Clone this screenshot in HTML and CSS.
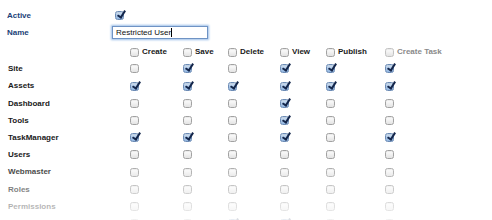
FILE: index.html
```html
<!DOCTYPE html>
<html lang="en">
<head>
    <meta charset="UTF-8">
    <title>Role</title>
    <link rel="stylesheet" href="styles.css">
</head>
<body>
    <div id="wrap">
        <div class="field">
            <label class="lbl">Active</label>
            <span class="cb on active-cb"></span>
        </div>
        <div class="field">
            <label class="lbl">Name</label>
            <span class="input">Restricted User<i class="caret"></i></span>
        </div>

        <div class="perm">
            <div class="row head">
                <span></span>
                <span><i class="cb"></i>Create</span>
                <span><i class="cb"></i>Save</span>
                <span><i class="cb"></i>Delete</span>
                <span><i class="cb"></i>View</span>
                <span><i class="cb"></i>Publish</span>
                <span class="off"><i class="cb"></i>Create Task</span>
            </div>
            <div class="row">
                <span>Site</span>
                <span><i class="cb"></i></span><span><i class="cb on"></i></span><span><i class="cb"></i></span>
                <span><i class="cb on"></i></span><span><i class="cb on"></i></span><span><i class="cb on"></i></span>
            </div>
            <div class="row">
                <span>Assets</span>
                <span><i class="cb on"></i></span><span><i class="cb on"></i></span><span><i class="cb on"></i></span>
                <span><i class="cb on"></i></span><span><i class="cb on"></i></span><span><i class="cb on"></i></span>
            </div>
            <div class="row">
                <span>Dashboard</span>
                <span><i class="cb"></i></span><span><i class="cb"></i></span><span><i class="cb"></i></span>
                <span><i class="cb on"></i></span><span><i class="cb"></i></span><span><i class="cb"></i></span>
            </div>
            <div class="row">
                <span>Tools</span>
                <span><i class="cb"></i></span><span><i class="cb"></i></span><span><i class="cb"></i></span>
                <span><i class="cb on"></i></span><span><i class="cb"></i></span><span><i class="cb"></i></span>
            </div>
            <div class="row">
                <span>TaskManager</span>
                <span><i class="cb on"></i></span><span><i class="cb on"></i></span><span><i class="cb"></i></span>
                <span><i class="cb on"></i></span><span><i class="cb"></i></span><span><i class="cb on"></i></span>
            </div>
            <div class="row">
                <span>Users</span>
                <span><i class="cb"></i></span><span><i class="cb"></i></span><span><i class="cb"></i></span>
                <span><i class="cb"></i></span><span><i class="cb"></i></span><span><i class="cb"></i></span>
            </div>
            <div class="row">
                <span>Webmaster</span>
                <span><i class="cb"></i></span><span><i class="cb"></i></span><span><i class="cb"></i></span>
                <span><i class="cb"></i></span><span><i class="cb"></i></span><span><i class="cb"></i></span>
            </div>
            <div class="row">
                <span>Roles</span>
                <span><i class="cb"></i></span><span><i class="cb"></i></span><span><i class="cb"></i></span>
                <span><i class="cb"></i></span><span><i class="cb"></i></span><span><i class="cb"></i></span>
            </div>
            <div class="row">
                <span>Permissions</span>
                <span><i class="cb"></i></span><span><i class="cb"></i></span><span><i class="cb"></i></span>
                <span><i class="cb"></i></span><span><i class="cb"></i></span><span><i class="cb"></i></span>
            </div>
            <div class="row">
                <span></span>
                <span><i class="cb"></i></span><span><i class="cb"></i></span><span><i class="cb on"></i></span>
                <span><i class="cb on"></i></span><span><i class="cb"></i></span><span><i class="cb"></i></span>
            </div>
        </div>
    </div>
    <!-- 下の方をふわっと消す -->
    <div class="fade"></div>
</body>
</html>
```

FILE: styles.css
```css
body{
    margin: 0;
    background: #fff;
    font-family: "Liberation Sans", Arial, Helvetica, sans-serif;
    font-size: 8px;
    color: #1a1a1a;
    overflow: hidden;
}
#wrap{
    padding: 7px 0 0 8px;
}
.field{
    display: flex;
    align-items: center;
    height: 17px;
}
.lbl{
    width: 105px;
    margin-left: -1px;
    font-weight: bold;
    color: #213f78;
}
.active-cb{
    margin-left: 3px;
}
.input{
    display: flex;
    align-items: center;
    box-sizing: border-box;
    width: 96px;
    height: 13px;
    padding-left: 3px;
    border: 1px solid #6f93c4;
    box-shadow: 0 0 2px 1px #9cbfe8;
    font-size: 8px;
    color: #111;
}
.caret{
    width: 1px;
    height: 9px;
    background: #000;
}

/* チェックボックス */
.cb{
    position: relative;
    display: inline-block;
    box-sizing: border-box;
    width: 9px;
    height: 9px;
    border: 1px solid #a2a2a2;
    border-radius: 2.5px;
    background: linear-gradient(#ffffff, #e3e3e3);
    box-shadow: inset 0 1px 1px rgba(0,0,0,0.08);
    vertical-align: middle;
}
.cb.on{
    border-color: #6d8cb6;
    background: linear-gradient(#d3e3f5, #8fb3de);
}
.cb.on::after{
    content: '';
    position: absolute;
    left: 2.5px;
    top: -3px;
    width: 2.5px;
    height: 7px;
    border: solid #13254a;
    border-width: 0 2px 2px 0;
    transform: rotate(32deg);
}

.perm{
    margin-top: 3px;
}
.row{
    display: grid;
    grid-template-columns: 122px 53px 45px 52px 46px 59px 1fr;
    align-items: center;
    height: 17.2px;
    font-weight: bold;
}
.head{
    height: 16.2px;
}
.head .cb{
    margin-right: 3px;
}
.head .off{
    color: #8a8a8a;
}
.head .off .cb{
    border-color: #c2c2c2;
}

.fade{
    position: absolute;
    left: 0;
    right: 0;
    top: 158px;
    height: 62px;
    background: linear-gradient(rgba(255,255,255,0), rgba(255,255,255,0.85));
}
```
